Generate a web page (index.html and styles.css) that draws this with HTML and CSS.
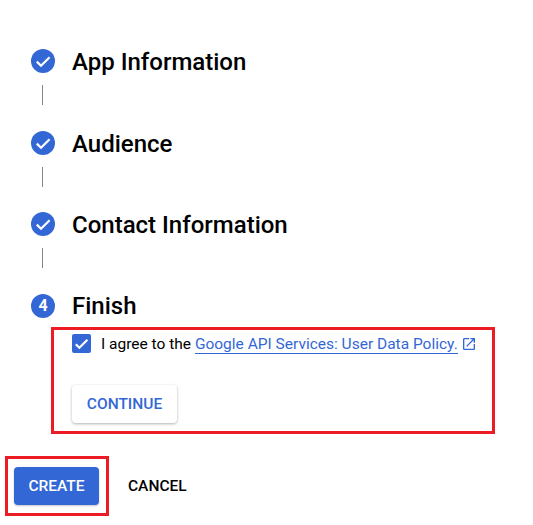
FILE: index.html
```html
<!DOCTYPE html>
<html lang="en">
<head>
    <meta charset="UTF-8">
    <meta name="viewport" content="width=device-width, initial-scale=1.0">
    <title>Create branding</title>
    <link rel="stylesheet" href="styles.css">
</head>
<body>
    <div class="stepper">
        <div class="step">
            <span class="step-icon">
                <svg viewBox="0 0 24 24" width="24" height="24"><path d="M5.8 12.6l4.2 4.2 8.6-8.6" fill="none" stroke="#fff" stroke-width="2.2"/></svg>
            </span>
            <h2 class="step-title">App Information</h2>
        </div>
        <div class="step-line"></div>
        <div class="step">
            <span class="step-icon">
                <svg viewBox="0 0 24 24" width="24" height="24"><path d="M5.8 12.6l4.2 4.2 8.6-8.6" fill="none" stroke="#fff" stroke-width="2.2"/></svg>
            </span>
            <h2 class="step-title">Audience</h2>
        </div>
        <div class="step-line"></div>
        <div class="step">
            <span class="step-icon">
                <svg viewBox="0 0 24 24" width="24" height="24"><path d="M5.8 12.6l4.2 4.2 8.6-8.6" fill="none" stroke="#fff" stroke-width="2.2"/></svg>
            </span>
            <h2 class="step-title">Contact Information</h2>
        </div>
        <div class="step-line"></div>
        <div class="step">
            <span class="step-icon">4</span>
            <h2 class="step-title">Finish</h2>
        </div>
    </div>

    <div class="finish-box">
        <div class="agree-row">
            <span class="checkbox">
                <svg viewBox="0 0 19 19" width="19" height="19"><path d="M3.8 10.2l3.6 3.6 8-8" fill="none" stroke="#fff" stroke-width="2.2"/></svg>
            </span>
            <span class="agree-text">I agree to the <a class="policy-link" href="#">Google API Services: User Data Policy.</a></span>
            <svg class="external-icon" viewBox="0 0 24 24" width="16" height="16"><path d="M19 19H5V5h7V3H5a2 2 0 0 0-2 2v14a2 2 0 0 0 2 2h14a2 2 0 0 0 2-2v-7h-2v7zM14 3v2h3.59l-9.83 9.83 1.41 1.41L19 6.41V10h2V3h-7z" fill="#3367d6"/></svg>
        </div>
        <button class="btn-continue">CONTINUE</button>
    </div>

    <div class="actions">
        <div class="create-box">
            <button class="btn-create">CREATE</button>
        </div>
        <button class="btn-cancel">CANCEL</button>
    </div>
</body>
</html>
```

FILE: styles.css
```css
body {
    margin: 0;
    font-family: 'Roboto', 'Liberation Sans', sans-serif;
    background: #fff;
    color: #000;
    height: 525px;
    overflow: hidden;
}
.stepper {
    padding: 47px 0 0 31px;
}
.step {
    display: flex;
    align-items: center;
    height: 28px;
}
.step-icon {
    display: flex;
    align-items: center;
    justify-content: center;
    width: 24px;
    height: 24px;
    border-radius: 50%;
    background: #3367d6;
    color: #fff;
    font-size: 16px;
    font-weight: 700;
}
.step-title {
    margin: 2px 0 0 17px;
    font-size: 24px;
    font-weight: 500;
    line-height: 28px;
}
.step:last-child .step-title {
    margin-top: 0;
}
.step-line {
    width: 1px;
    height: 20px;
    margin: 10px 0 23.67px 11px;
    background: #80868b;
}
.finish-box {
    box-sizing: border-box;
    width: 444px;
    height: 107px;
    margin: 7.5px 0 0 51px;
    padding: 4px 0 0 18px;
    border: 3px solid #ed1c24;
}
.agree-row {
    display: flex;
    align-items: flex-start;
}
.checkbox {
    flex: none;
    width: 19px;
    height: 19px;
    border-radius: 2px;
    background: #3367d6;
}
.checkbox svg {
    display: block;
}
.agree-text {
    margin: 1px 0 0 10px;
    font-size: 15.5px;
    line-height: 19px;
}
.policy-link {
    color: #3367d6;
    text-decoration: none;
    border-bottom: 1px solid #3367d6;
}
.external-icon {
    margin: 2px 0 0 3px;
}
.btn-continue {
    display: block;
    width: 105px;
    height: 38px;
    margin-top: 31px;
    padding: 0;
    border: none;
    border-radius: 4px;
    background: #fff;
    color: #3367d6;
    font-family: inherit;
    font-size: 15.5px;
    font-weight: 500;
    box-shadow: 0 1px 3px rgba(60, 64, 67, 0.4);
}
.actions {
    display: flex;
    align-items: center;
    margin: 22px 0 0 5px;
}
.create-box {
    box-sizing: border-box;
    width: 104px;
    height: 60px;
    padding: 8px 0 0 6px;
    border: 3px solid #ed1c24;
}
.btn-create {
    display: block;
    width: 85px;
    height: 38px;
    padding: 0;
    border: none;
    border-radius: 4px;
    background: #3367d6;
    color: #fff;
    font-family: inherit;
    font-size: 15.5px;
    font-weight: 500;
    box-shadow: 0 1px 2px rgba(60, 64, 67, 0.3);
}
.btn-cancel {
    margin-left: 19px;
    padding: 0;
    border: none;
    background: none;
    color: #000;
    font-family: inherit;
    font-size: 15.5px;
    font-weight: 500;
}
```
